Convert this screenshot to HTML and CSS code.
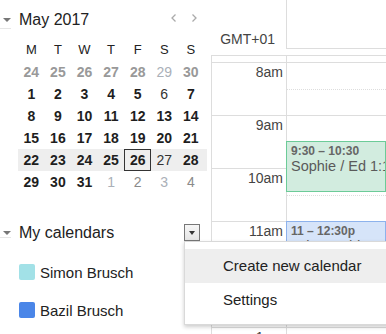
FILE: index.html
```html
<!DOCTYPE html>
<html lang="en">
<head>
    <meta charset="UTF-8">
    <title>Calendar - Week</title>
    <link rel="stylesheet" href="styles.css">
</head>
<body>
    <div class="app">
        <aside class="sidebar">
            <div class="month-head">
                <span class="caret"></span>
                <span class="month-title">May 2017</span>
                <span class="nav">
                    <svg width="5" height="8" viewBox="0 0 5 8"><polyline points="4.5,0.5 1,4 4.5,7.5" fill="none" stroke="#aaa" stroke-width="1.3"/></svg>
                    <svg width="5" height="8" viewBox="0 0 5 8"><polyline points="0.5,0.5 4,4 0.5,7.5" fill="none" stroke="#aaa" stroke-width="1.3"/></svg>
                </span>
            </div>

            <div class="mini">
                <div class="mini-row dow">
                    <span>M</span><span>T</span><span>W</span><span>T</span><span>F</span><span>S</span><span>S</span>
                </div>
                <div class="mini-row">
                    <span class="o">24</span><span class="o">25</span><span class="o">26</span><span class="o">27</span><span class="o">28</span><span class="ol">29</span><span class="o">30</span>
                </div>
                <div class="mini-row">
                    <span>1</span><span>2</span><span>3</span><span>4</span><span>5</span><span class="n">6</span><span>7</span>
                </div>
                <div class="mini-row">
                    <span>8</span><span>9</span><span>10</span><span>11</span><span>12</span><span>13</span><span>14</span>
                </div>
                <div class="mini-row">
                    <span>15</span><span>16</span><span>17</span><span>18</span><span>19</span><span>20</span><span>21</span>
                </div>
                <div class="mini-row cur">
                    <span>22</span><span>23</span><span>24</span><span>25</span><span class="sel">26</span><span class="n">27</span><span>28</span>
                </div>
                <div class="mini-row">
                    <span>29</span><span>30</span><span>31</span><span class="ol">1</span><span class="og">2</span><span class="ol">3</span><span class="og">4</span>
                </div>
            </div>

            <div class="cal-head">
                <span class="caret"></span>
                <span class="cal-title">My calendars</span>
                <span class="drop"></span>
            </div>
            <ul class="cal-list">
                <li><span class="swatch simon"></span>Simon Brusch</li>
                <li><span class="swatch bazil"></span>Bazil Brusch</li>
            </ul>
        </aside>

        <main class="week">
            <div class="week-head">
                <div class="tz">GMT+01</div>
                <div class="day-head"></div>
            </div>
            <div class="grid">
                <div class="times">
                    <div class="hour-label">8am</div>
                    <div class="hour-label">9am</div>
                    <div class="hour-label">10am</div>
                    <div class="hour-label">11am</div>
                    <div class="hour-label">12pm</div>
                    <div class="hour-label">1pm</div>
                </div>
                <div class="day">
                    <div class="slot"></div>
                    <div class="slot"></div>
                    <div class="slot"></div>
                    <div class="slot"></div>
                    <div class="slot"></div>
                    <div class="slot"></div>

                    <div class="event green">
                        <div class="ev-time">9:30 – 10:30</div>
                        <div class="ev-title">Sophie / Ed 1:1</div>
                    </div>
                    <div class="event blue">
                        <div class="ev-time">11 – 12:30p</div>
                        <div class="ev-title">Take Daddy to lunch</div>
                    </div>
                </div>
            </div>
        </main>

        <div class="menu">
            <div class="menu-item active">Create new calendar</div>
            <div class="menu-item">Settings</div>
        </div>
    </div>
</body>
</html>
```

FILE: styles.css
```css
/* Reset */
* {
    margin: 0;
    padding: 0;
    box-sizing: border-box;
}

html, body {
    width: 386px;
    height: 334px;
    overflow: hidden;
}

body {
    font-family: "Liberation Sans", Arial, sans-serif;
    color: #222;
    background: #fff;
}

.app {
    display: flex;
    height: 334px;
    position: relative;
    overflow: hidden;
}

/* Sidebar */
.sidebar {
    width: 211px;
    flex: none;
}

.caret {
    width: 0;
    height: 0;
    border-left: 4px solid transparent;
    border-right: 4px solid transparent;
    border-top: 4px solid #777;
    margin: 0 8px 0 3px;
}

/* faint rule peeking out left of the section carets */
.month-head::before,
.cal-head::before {
    content: '';
    position: absolute;
    left: 0;
    width: 11px;
    border-top: 1px solid #e6e6e6;
}

.month-head {
    display: flex;
    align-items: center;
    height: 20px;
    margin-top: 10px;
    position: relative;
}

.month-head::before { top: 18px; }

.month-title {
    font-size: 16px;
    line-height: 20px;
}

.nav {
    margin-left: auto;
    padding-right: 14px;
    display: flex;
    gap: 16px;
    align-self: flex-start;
    margin-top: 4px;
}

/* Mini month */
.mini {
    margin: 9px 0 0 18px;
    width: 189px;
}

.mini-row {
    display: flex;
    height: 22px;
}

.mini-row span {
    width: 26.6px;
    text-align: center;
    font-size: 14px;
    font-weight: bold;
    line-height: 22px;
    color: #1e1e1e;
}

.mini-row.dow span {
    font-size: 13px;
    font-weight: normal;
    color: #222;
}

.mini-row span.o { color: #999; }
.mini-row span.ol { color: #aab0b8; font-weight: normal; }
.mini-row span.og { color: #8a8a8a; font-weight: normal; }
.mini-row span.n { color: #333; font-weight: normal; }

.mini-row.cur {
    background: #eee;
}

.mini-row span.sel {
    box-shadow: inset 0 0 0 1px #333;
}

/* My calendars */
.cal-head {
    display: flex;
    align-items: center;
    height: 17px;
    margin-top: 31px;
    position: relative;
}

.cal-head::before { top: 13px; }

.cal-title {
    flex: 1;
    font-size: 16px;
    line-height: 17px;
}

.drop {
    width: 16px;
    height: 17px;
    margin-right: 11px;
    border: 1px solid #777;
    background: linear-gradient(#f6f6f6, #e4e4e4);
    display: flex;
    align-items: center;
    justify-content: center;
}

.drop::before {
    content: '';
    border-left: 3.5px solid transparent;
    border-right: 3.5px solid transparent;
    border-top: 4px solid #333;
}

.cal-list {
    list-style: none;
    margin-top: 12px;
    padding-left: 19px;
}

.cal-list li {
    height: 38px;
    display: flex;
    align-items: center;
    font-size: 15px;
}

.swatch {
    width: 16px;
    height: 16px;
    border-radius: 2px;
    margin-right: 5px;
}

.swatch.simon { background: #a2e1e7; }
.swatch.bazil { background: #4a86e8; }

/* Week view */
.week {
    flex: 1;
    display: flex;
    flex-direction: column;
    min-width: 0;
}

.week-head {
    display: flex;
    height: 55px;
    flex: none;
}

.tz {
    width: 75px;
    font-size: 14px;
    line-height: 16px;
    color: #444;
    text-align: right;
    padding: 31px 11px 0 0;
}

.day-head {
    flex: 1;
    height: 49px;
    border-left: 1px solid #ddd;
    border-bottom: 1px solid #ddd;
}

.grid {
    flex: 1;
    display: flex;
    border-top: 1px solid #ddd;
    border-left: 1px solid #ddd;
}

.times {
    width: 74px;
    flex: none;
    padding-top: 6px;
}

.hour-label {
    height: 53px;
    border-top: 1px solid #ddd;
    text-align: right;
    padding: 1px 3px 0 0;
    font-size: 14px;
    line-height: 16px;
    color: #444;
}

.day {
    flex: 1;
    border-left: 1px solid #ddd;
    padding-top: 6px;
    position: relative;
}

.slot {
    height: 53px;
    border-top: 1px solid #ddd;
    position: relative;
}

.slot::after {
    content: '';
    position: absolute;
    left: 0;
    right: 0;
    top: 26px;
    border-top: 1px dotted #ddd;
}

/* Events */
.event {
    position: absolute;
    left: -1px;
    right: 0;
    border: 1px solid;
    padding: 2px 4px;
    overflow: hidden;
    white-space: nowrap;
}

.event.green {
    top: 85px;
    height: 51px;
    background: #d2ecdf;
    border-color: #6ccb98;
}

.event.blue {
    top: 165px;
    height: 80px;
    background: #d6e4f9;
    border-color: #8db2ec;
}

.ev-time {
    font-size: 12px;
    font-weight: bold;
    line-height: 14px;
    color: #666;
}

.ev-title {
    font-size: 14.5px;
    line-height: 16px;
    color: #5a5a5a;
}

/* Dropdown menu */
.menu {
    position: absolute;
    left: 184px;
    top: 241px;
    width: 230px;
    padding: 7px 0;
    background: #fff;
    border: 1px solid rgba(0,0,0,0.15);
    box-shadow: 0 2px 4px rgba(0,0,0,0.2);
}

.menu-item {
    height: 34px;
    line-height: 34px;
    padding-left: 38px;
    font-size: 15px;
    color: #222;
}

.menu-item.active {
    background: #eee;
}
```
